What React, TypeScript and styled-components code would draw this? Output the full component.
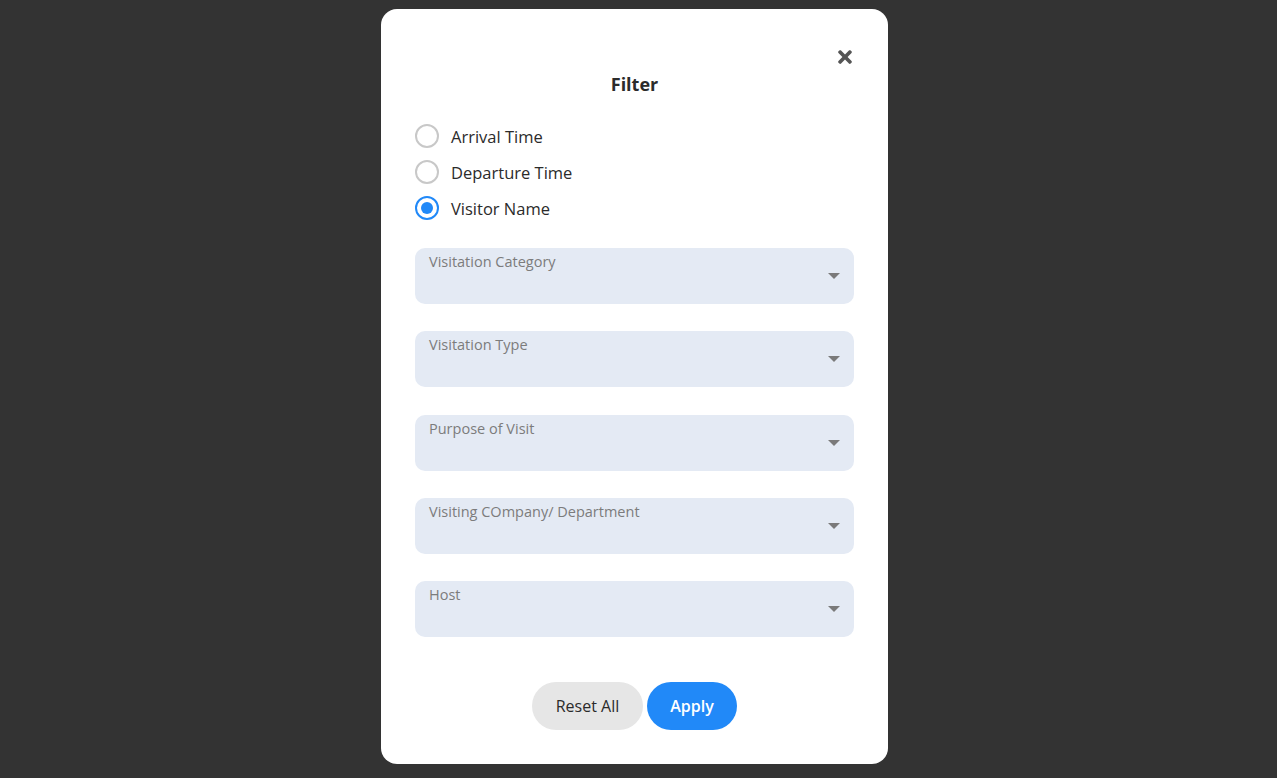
import React, { useState } from "react";
import styled, { createGlobalStyle } from "styled-components";
import { FaTimes } from "react-icons/fa";

const GlobalStyle = createGlobalStyle`
  html, body {
    margin: 0;
    padding: 0;
    background: #333333;
    font-family: "Open Sans", "Liberation Sans", sans-serif;
  }
  * {
    box-sizing: border-box;
  }
`;

const Backdrop = styled.div`
  width: 100%;
  min-height: 778px;
  display: flex;
  justify-content: center;
  align-items: flex-start;
  padding: 9px 8px 0 0;
`;

const Modal = styled.div`
  position: relative;
  width: 507px;
  height: 755px;
  background: #ffffff;
  border-radius: 16px;
  padding: 62px 34px 34px;
  display: flex;
  flex-direction: column;
`;

const CloseButton = styled.button`
  position: absolute;
  top: 38px;
  right: 33px;
  width: 20px;
  height: 20px;
  padding: 0;
  border: none;
  background: transparent;
  cursor: pointer;
  color: #555555;
  display: flex;
  align-items: center;
  justify-content: center;
  svg {
    width: 20px;
    height: 20px;
  }
`;

const Title = styled.h2`
  margin: 0;
  text-align: center;
  font-size: 18px;
  line-height: 26px;
  font-weight: 700;
  color: #2b2b2b;
`;

const RadioGroup = styled.div`
  margin-top: 21px;
  display: flex;
  flex-direction: column;
`;

const RadioRow = styled.label`
  display: flex;
  align-items: center;
  height: 36px;
  gap: 12px;
  cursor: pointer;
  font-size: 16.5px;
  font-weight: 500;
  color: #2b2b2b;
`;

const RadioInput = styled.input.attrs({ type: "radio" })`
  appearance: none;
  margin: 0;
  width: 24px;
  height: 24px;
  border-radius: 50%;
  border: 2px solid #c8c8c8;
  display: grid;
  place-items: center;
  cursor: pointer;
  &::after {
    content: "";
    width: 12px;
    height: 12px;
    border-radius: 50%;
    background: #2189f8;
    transform: scale(0);
  }
  &:checked {
    border-color: #2189f8;
  }
  &:checked::after {
    transform: scale(1);
  }
`;

const Fields = styled.div`
  margin-top: 22px;
  display: flex;
  flex-direction: column;
  gap: 27.25px;
`;

const SelectBox = styled.div`
  position: relative;
  height: 56px;
  border-radius: 10px;
  background: #e4eaf4;
  padding: 5px 14px 0;
  cursor: pointer;
`;

const SelectLabel = styled.span`
  display: block;
  font-size: 14.5px;
  line-height: 18px;
  font-weight: 500;
  color: #7c7c7c;
`;

const Caret = styled.span`
  position: absolute;
  right: 14px;
  top: 50%;
  transform: translateY(-50%);
  width: 0;
  height: 0;
  border-left: 6px solid transparent;
  border-right: 6px solid transparent;
  border-top: 6px solid #7a7a7a;
`;

const Actions = styled.div`
  margin-top: auto;
  display: flex;
  justify-content: center;
  gap: 4px;
`;

const Button = styled.button<{ $primary?: boolean }>`
  height: 48px;
  padding: 0 22px;
  border: none;
  border-radius: 24px;
  font-family: inherit;
  font-size: 16px;
  font-weight: ${(p) => (p.$primary ? 600 : 500)};
  background: ${(p) => (p.$primary ? "#2189f8" : "#e6e6e6")};
  color: ${(p) => (p.$primary ? "#ffffff" : "#2b2b2b")};
  cursor: pointer;
`;

const sortOptions = ["Arrival Time", "Departure Time", "Visitor Name"];

const fields = [
  "Visitation Category",
  "Visitation Type",
  "Purpose of Visit",
  "Visiting COmpany/ Department",
  "Host",
];

export default function App() {
  const [sortBy, setSortBy] = useState("Visitor Name");

  return (
    <>
      <GlobalStyle />
      <Backdrop>
        <Modal>
          <CloseButton aria-label="Close">
            <FaTimes />
          </CloseButton>
          <Title>Filter</Title>
          <RadioGroup>
            {sortOptions.map((opt) => (
              <RadioRow key={opt}>
                <RadioInput
                  name="sort"
                  checked={sortBy === opt}
                  onChange={() => setSortBy(opt)}
                />
                {opt}
              </RadioRow>
            ))}
          </RadioGroup>
          <Fields>
            {fields.map((f) => (
              <SelectBox key={f}>
                <SelectLabel>{f}</SelectLabel>
                <Caret />
              </SelectBox>
            ))}
          </Fields>
          <Actions>
            <Button style={{ width: 111 }}>Reset All</Button>
            <Button $primary style={{ width: 90 }}>
              Apply
            </Button>
          </Actions>
        </Modal>
      </Backdrop>
    </>
  );
}
